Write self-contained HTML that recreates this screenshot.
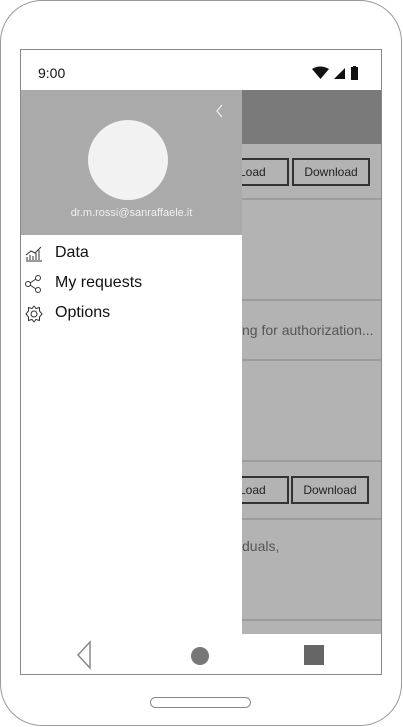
<!DOCTYPE html>
<html><head><style>
*{margin:0;padding:0;box-sizing:border-box}
body{width:403px;height:727px;background:#fff;position:relative;overflow:hidden;font-family:"Liberation Sans",sans-serif}
.abs{position:absolute}
.phone{left:0;top:0;width:402px;height:726px;border:1.5px solid #999;border-radius:42px;background:#fff}
.screen{left:20px;top:49px;width:362px;height:626px;border:1px solid #888;background:#fff;overflow:hidden}
.line{height:2px;background:#9c9c9c;left:242px;width:139px}
.btn{border:2px solid #333;background:#b3b3b3;font-size:12px;color:#222;text-align:center;line-height:24px;height:28px}
.txt{font-size:14px;color:#555;left:242px}
.item{left:55px;font-size:16px;color:#111}
</style></head><body>
<div class="abs phone"></div>
<div class="abs screen"></div>
<div class="abs" style="left:38px;top:65px;font-size:14px;color:#111">9:00</div>
<svg class="abs" style="left:310px;top:66px" width="56" height="16">
<path d="M2 3 Q10 -2 19 3 L10.5 13 Z" fill="#111"/>
<path d="M24 13 L35 13 L35 2 Z" fill="#111"/>
<rect x="41" y="1" width="7" height="13" fill="#111"/><rect x="43" y="0" width="3" height="2" fill="#111"/>
</svg>
<div class="abs" style="left:242px;top:90px;width:139px;height:544px;background:#b3b3b3"></div>
<div class="abs" style="left:242px;top:90px;width:139px;height:54px;background:#7a7a7a"></div>
<div class="abs line" style="top:198px"></div>
<div class="abs line" style="top:299px"></div>
<div class="abs line" style="top:359px"></div>
<div class="abs line" style="top:460px"></div>
<div class="abs line" style="top:518px"></div>
<div class="abs line" style="top:619px"></div>
<div class="abs btn" style="left:200px;top:158px;width:89px;padding-left:37px;text-align:left">Load</div>
<div class="abs btn" style="left:292px;top:158px;width:78px">Download</div>
<div class="abs btn" style="left:200px;top:476px;width:89px;padding-left:37px;text-align:left">Load</div>
<div class="abs btn" style="left:291px;top:476px;width:78px">Download</div>
<div class="abs txt" style="top:322px">ng for authorization...</div>
<div class="abs txt" style="top:538px">duals,</div>
<div class="abs" style="left:21px;top:90px;width:221px;height:544px;background:#fff"></div>
<div class="abs" style="left:21px;top:90px;width:221px;height:145px;background:#aaa"></div>
<svg class="abs" style="left:214px;top:103px" width="12" height="16"><path d="M8 2 L3 8 L8 14" stroke="#eee" stroke-width="1.3" fill="none"/></svg>
<div class="abs" style="left:88px;top:120px;width:80px;height:80px;border-radius:50%;background:#f2f2f2"></div>
<div class="abs" style="left:21px;top:207px;width:221px;text-align:center;font-size:11px;color:#f0f0f0">dr.m.rossi@sanraffaele.it</div>
<svg class="abs" style="left:24px;top:244px" width="20" height="20" fill="none" stroke="#333" stroke-width="1">
<path d="M2 17 H18 M3 16 V13 M6 16 V11 M9 16 V12 M12 16 V9 M15 16 V6 M2 11 L7 7 L11 9 L17 3"/></svg>
<svg class="abs" style="left:24px;top:274px" width="20" height="20" fill="none" stroke="#333" stroke-width="1">
<circle cx="4" cy="10" r="2.5"/><circle cx="14" cy="4" r="2.5"/><circle cx="14" cy="16" r="2.5"/><path d="M6 9 L12 5 M6 11 L12 15"/></svg>
<svg class="abs" style="left:24px;top:304px" width="20" height="20" fill="none" stroke="#333" stroke-width="1">
<circle cx="10" cy="10" r="3"/><path d="M10 2 L12 4.5 L15.5 3.5 L15.5 7 L18 10 L15.5 13 L15.5 16.5 L12 15.5 L10 18 L8 15.5 L4.5 16.5 L4.5 13 L2 10 L4.5 7 L4.5 3.5 L8 4.5 Z"/></svg>
<div class="abs item" style="top:244px">Data</div>
<div class="abs item" style="top:274px">My requests</div>
<div class="abs item" style="top:304px">Options</div>
<svg class="abs" style="left:74px;top:640px" width="20" height="30"><path d="M16 2 L4 15 L16 28 Z" fill="none" stroke="#888" stroke-width="1.5"/></svg>
<div class="abs" style="left:191px;top:647px;width:18px;height:18px;border-radius:50%;background:#777"></div>
<div class="abs" style="left:304px;top:645px;width:20px;height:20px;background:#666"></div>
<div class="abs" style="left:150px;top:697px;width:101px;height:11px;border:1.3px solid #888;border-radius:6px"></div>
</body></html>
